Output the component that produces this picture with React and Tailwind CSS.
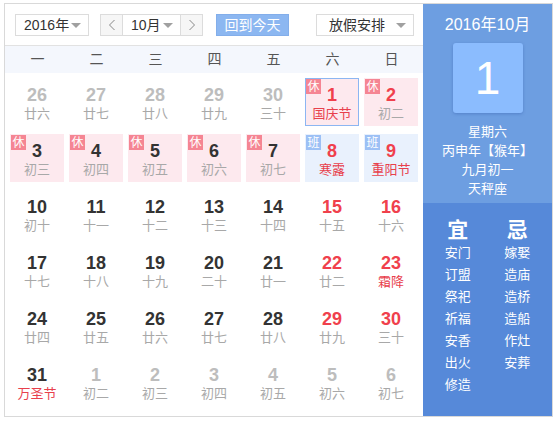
import React from "react";

const F = { fontFamily: '"Liberation Sans", Arial, "Noto Sans CJK SC", sans-serif' };

const rows = [
  [
    { n: 26, l: "廿六", g: 1 }, { n: 27, l: "廿七", g: 1 }, { n: 28, l: "廿八", g: 1 }, { n: 29, l: "廿九", g: 1 }, { n: 30, l: "三十", g: 1 },
    { n: 1, l: "国庆节", r: 1, lr: 1, b: "休", sel: 1 }, { n: 2, l: "初二", r: 1, b: "休" },
  ],
  [
    { n: 3, l: "初三", b: "休" }, { n: 4, l: "初四", b: "休" }, { n: 5, l: "初五", b: "休" }, { n: 6, l: "初六", b: "休" }, { n: 7, l: "初七", b: "休" },
    { n: 8, l: "寒露", r: 1, lr: 1, b: "班" }, { n: 9, l: "重阳节", r: 1, lr: 1, b: "班" },
  ],
  [
    { n: 10, l: "初十" }, { n: 11, l: "十一" }, { n: 12, l: "十二" }, { n: 13, l: "十三" }, { n: 14, l: "十四" },
    { n: 15, l: "十五", r: 1 }, { n: 16, l: "十六", r: 1 },
  ],
  [
    { n: 17, l: "十七" }, { n: 18, l: "十八" }, { n: 19, l: "十九" }, { n: 20, l: "二十" }, { n: 21, l: "廿一" },
    { n: 22, l: "廿二", r: 1 }, { n: 23, l: "霜降", r: 1, lr: 1 },
  ],
  [
    { n: 24, l: "廿四" }, { n: 25, l: "廿五" }, { n: 26, l: "廿六" }, { n: 27, l: "廿七" }, { n: 28, l: "廿八" },
    { n: 29, l: "廿九", r: 1 }, { n: 30, l: "三十", r: 1 },
  ],
  [
    { n: 31, l: "万圣节", lr: 1 }, { n: 1, l: "初二", g: 1 }, { n: 2, l: "初三", g: 1 }, { n: 3, l: "初四", g: 1 }, { n: 4, l: "初五", g: 1 },
    { n: 5, l: "初六", g: 1 }, { n: 6, l: "初七", g: 1 },
  ],
];

const yi = ["安门", "订盟", "祭祀", "祈福", "安香", "出火", "修造"];
const ji = ["嫁娶", "造庙", "造桥", "造船", "作灶", "安葬"];

function Caret() {
  return (
    <span className="inline-block w-0 h-0 border-l-[5px] border-r-[5px] border-t-[5px] border-l-transparent border-r-transparent border-t-[#a0a0a0]" />
  );
}

function Cell({ d }) {
  let bg = "";
  if (d.b === "休") bg = "bg-[#fde9ee]";
  if (d.b === "班") bg = "bg-[#e9f1fd]";
  const border = d.sel ? "border border-[#8cb6f2]" : "border border-transparent";
  const numColor = d.g ? "text-[#bdbdbd]" : d.r ? "text-[#f0404c]" : "text-[#333333]";
  const lunColor = d.lr ? "text-[#e8404c]" : "text-[#a8a8a8]";
  return (
    <div className="h-[56px] pt-[4px] pl-[2px]">
      <div className={`relative w-[54px] h-[48px] ${bg} ${border} flex flex-col items-center`}>
        {d.b && (
          <span
            className={`absolute left-0 top-0 w-[15px] h-[15px] flex items-center justify-center text-white text-[12px] leading-none ${d.b === "休" ? "bg-[#f58593]" : "bg-[#9cc0f5]"}`}
          >
            {d.b}
          </span>
        )}
        <span className={`mt-[6px] text-[18px] leading-[20px] font-bold ${numColor}`}>{d.n}</span>
        <span className={`mt-[1px] text-[13px] leading-[16px] ${lunColor}`}>{d.l}</span>
      </div>
    </div>
  );
}

export default function App() {
  return (
    <div className="w-[556px] h-[424px] bg-white" style={F}>
      <div className="absolute left-[4px] top-[3px] w-[549px] h-[414px] border border-[#d9d9d9] flex">
        {/* left */}
        <div className="w-[418px] flex flex-col">
          <div className="h-[42px] border-b border-[#e2e2e2] flex items-start pt-[10px] pl-[10px]">
            <div className="w-[74px] h-[22px] border border-[#dcdcdc] flex items-center justify-between pl-[8px] pr-[7px] text-[14px] text-[#333]">
              <span>2016年</span>
              <Caret />
            </div>
            <div className="ml-[11px] w-[103px] h-[22px] border border-[#dcdcdc] flex text-[14px] text-[#333]">
              <div className="w-[22px] h-full bg-[#f6f6f6] border-r border-[#dcdcdc] flex items-center justify-center">
                <svg width="8" height="12" viewBox="0 0 8 12"><path d="M6.5 1 L1.5 6 L6.5 11" fill="none" stroke="#888" strokeWidth="1" /></svg>
              </div>
              <div className="flex-1 flex items-center justify-between pl-[8px] pr-[7px]">
                <span>10月</span>
                <Caret />
              </div>
              <div className="w-[22px] h-full bg-[#f6f6f6] border-l border-[#dcdcdc] flex items-center justify-center">
                <svg width="8" height="12" viewBox="0 0 8 12"><path d="M1.5 1 L6.5 6 L1.5 11" fill="none" stroke="#888" strokeWidth="1" /></svg>
              </div>
            </div>
            <div className="ml-[13px] w-[73px] h-[22px] bg-[#8cb7f1] border border-[#83aeea] flex items-center justify-center text-white text-[14px]">
              回到今天
            </div>
            <div className="ml-[27px] w-[98px] h-[22px] border border-[#dcdcdc] flex items-center justify-between pl-[12px] pr-[7px] text-[14px] text-[#333]">
              <span>放假安排</span>
              <Caret />
            </div>
          </div>
          <div className="h-[27px] bg-[#f4f7fd] grid grid-cols-[repeat(7,59px)] pl-[3px] items-center text-[14px] text-[#555]">
            {["一", "二", "三", "四", "五", "六", "日"].map((w) => (
              <div key={w} className="text-center">{w}</div>
            ))}
          </div>
          <div className="pl-[3px] mt-[1px] grid grid-cols-[repeat(7,59px)]">
            {rows.flat().map((d, i) => (
              <Cell key={i} d={d} />
            ))}
          </div>
        </div>
        {/* right */}
        <div className="w-[129px] flex flex-col text-white">
          <div className="h-[199px] bg-[#6d9ee1] flex flex-col items-center pt-[10px]">
            <div className="text-[16px] leading-[22px]">2016年10月</div>
            <div className="mt-[7px] w-[70px] h-[70px] rounded-[3px] bg-[#8bbcfe] shadow-[0_1px_3px_rgba(40,80,160,0.35)] flex items-center justify-center text-[46px] leading-none">
              1
            </div>
            <div className="mt-[9px] flex flex-col items-center text-[13px] leading-[19px]">
              <span>星期六</span>
              <span>丙申年【猴年】</span>
              <span>九月初一</span>
              <span>天秤座</span>
            </div>
          </div>
          <div className="flex-1 bg-[#5689d9] flex px-[5px] pt-[15px]">
            <div className="w-[60px] flex flex-col items-center">
              <div className="text-[21px] leading-[24px] font-bold">宜</div>
              {yi.map((t) => (
                <div key={t} className="text-[13px] leading-[22px]">{t}</div>
              ))}
            </div>
            <div className="w-[60px] flex flex-col items-center">
              <div className="text-[21px] leading-[24px] font-bold">忌</div>
              {ji.map((t) => (
                <div key={t} className="text-[13px] leading-[22px]">{t}</div>
              ))}
            </div>
          </div>
        </div>
      </div>
    </div>
  );
}
